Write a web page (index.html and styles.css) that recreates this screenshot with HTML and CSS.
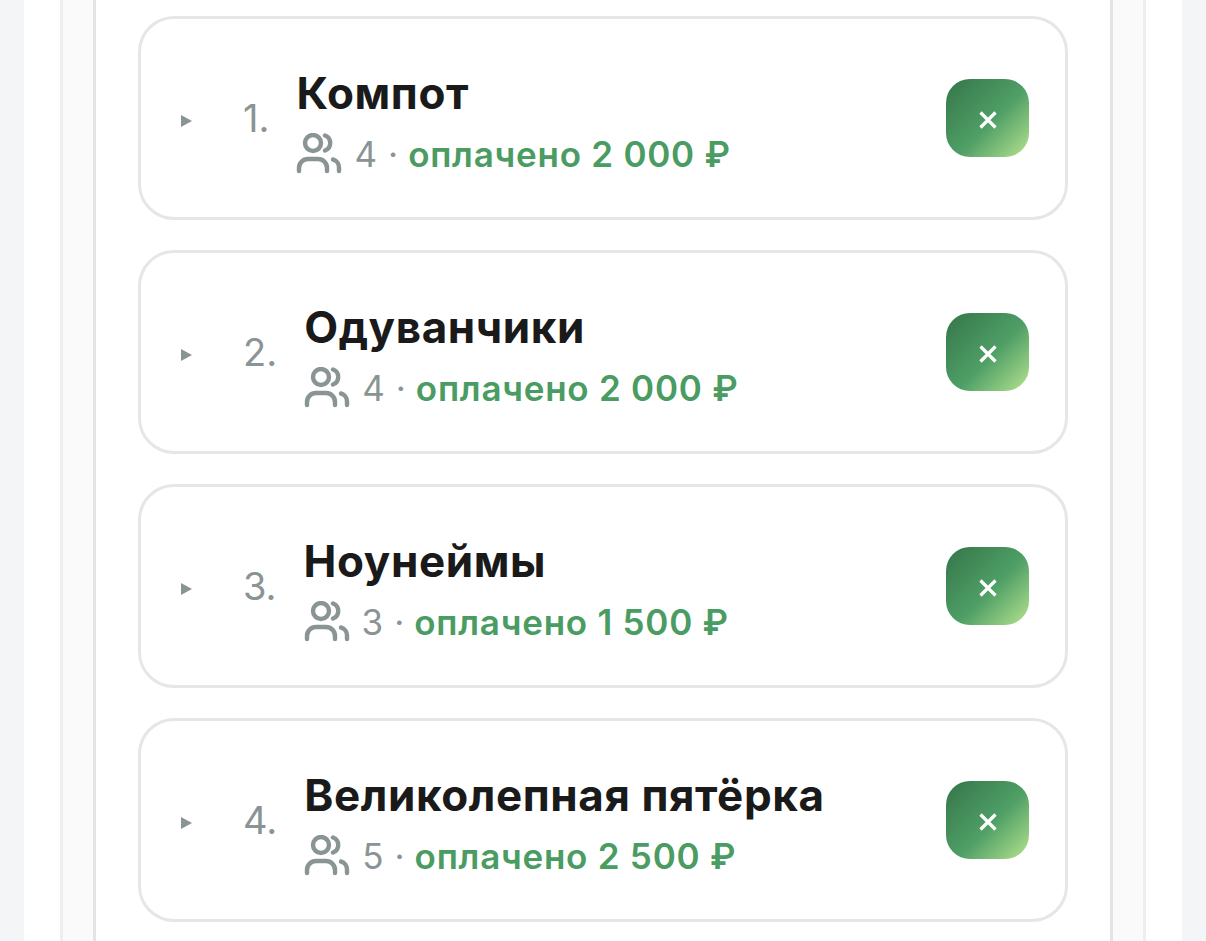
FILE: index.html
```html
<!DOCTYPE html>
<html lang="en">
<head>
    <meta charset="UTF-8">
    <meta name="viewport" content="width=device-width, initial-scale=1.0">
    <title>Команды</title>
    <link rel="stylesheet" href="styles.css">
</head>
<body>
    <svg class="icon-defs" width="0" height="0">
        <symbol id="users" viewBox="0 0 46 42">
            <circle cx="17" cy="10" r="8"/>
            <path d="M29 2.500a8 8 0 0 1 0 15"/>
            <path d="M3 38v-3a9 9 0 0 1 9-9h10a9 9 0 0 1 9 9v3"/>
            <path d="M37 26.500a8 8 0 0 1 6 8v3.500"/>
        </symbol>
        <symbol id="cross" viewBox="0 0 20 20">
            <path d="M2.500 2.500l15 15M17.500 2.500l-15 15"/>
        </symbol>
    </svg>
    <div class="page">
        <div class="frame">
            <div class="panel">
                <div class="team-list">
                    <div class="team-card">
                        <span class="arrow"></span>
                        <span class="team-num">1.</span>
                        <div class="team-info">
                            <div class="team-name">Компот</div>
                            <div class="team-meta">
                                <svg class="users-icon"><use href="#users"/></svg>
                                <span>4</span><span class="dot">·</span><span class="paid">оплачено 2 000 ₽</span>
                            </div>
                        </div>
                        <button class="remove-btn"><svg class="cross-icon"><use href="#cross"/></svg></button>
                    </div>
                    <div class="team-card">
                        <span class="arrow"></span>
                        <span class="team-num">2.</span>
                        <div class="team-info">
                            <div class="team-name">Одуванчики</div>
                            <div class="team-meta">
                                <svg class="users-icon"><use href="#users"/></svg>
                                <span>4</span><span class="dot">·</span><span class="paid">оплачено 2 000 ₽</span>
                            </div>
                        </div>
                        <button class="remove-btn"><svg class="cross-icon"><use href="#cross"/></svg></button>
                    </div>
                    <div class="team-card">
                        <span class="arrow"></span>
                        <span class="team-num">3.</span>
                        <div class="team-info">
                            <div class="team-name">Ноунеймы</div>
                            <div class="team-meta">
                                <svg class="users-icon"><use href="#users"/></svg>
                                <span>3</span><span class="dot">·</span><span class="paid">оплачено 1 500 ₽</span>
                            </div>
                        </div>
                        <button class="remove-btn"><svg class="cross-icon"><use href="#cross"/></svg></button>
                    </div>
                    <div class="team-card">
                        <span class="arrow"></span>
                        <span class="team-num">4.</span>
                        <div class="team-info">
                            <div class="team-name">Великолепная пятёрка</div>
                            <div class="team-meta">
                                <svg class="users-icon"><use href="#users"/></svg>
                                <span>5</span><span class="dot">·</span><span class="paid">оплачено 2 500 ₽</span>
                            </div>
                        </div>
                        <button class="remove-btn"><svg class="cross-icon"><use href="#cross"/></svg></button>
                    </div>
                </div>
            </div>
        </div>
    </div>
</body>
</html>
```

FILE: styles.css
```css
html, body {
    height: 100%;
}

body {
    font-family: "Inter", sans-serif;
    margin: 0;
    padding: 0 24px;
    background-color: #f4f5f7;
    color: #1a1a1a;
    overflow: hidden;
}

.icon-defs {
    position: absolute;
}

.page {
    height: 100%;
    padding: 0 36px;
    background-color: #ffffff;
}

.frame {
    height: 100%;
    padding: 0 30px;
    background-color: #fafafb;
    border-left: 3px solid #eeeef1;
    border-right: 3px solid #eeeef1;
}

.panel {
    height: 100%;
    padding: 16px 42px 0;
    background-color: #ffffff;
    border-left: 3px solid #e4e4e7;
    border-right: 3px solid #e4e4e7;
}

.team-list {
    display: flex;
    flex-direction: column;
    gap: 30px;
}

.team-card {
    display: flex;
    flex-shrink: 0;
    align-items: center;
    box-sizing: border-box;
    height: 204px;
    padding: 0 36px 0 40px;
    background-color: #ffffff;
    border: 3px solid #e6e6e6;
    border-radius: 36px;
}

.arrow {
    width: 0;
    height: 0;
    margin: 6px 51px 0 0;
    border-top: 6px solid transparent;
    border-bottom: 6px solid transparent;
    border-left: 11px solid #8a9494;
}

.team-num {
    margin: 0 27px 0 0;
    font-size: 38px;
    color: #8a9494;
}

.team-info {
    flex: 1;
    padding-top: 7px;
}

.team-name {
    font-size: 44px;
    font-weight: 700;
    line-height: 50px;
    letter-spacing: 0.6px;
}

.team-meta {
    display: flex;
    align-items: center;
    margin-top: 15px;
    font-size: 35px;
    line-height: 40px;
    color: #8a9494;
}

.users-icon {
    flex-shrink: 0;
    width: 46px;
    height: 42px;
    margin-right: 12px;
    fill: none;
    stroke: #8a9494;
    stroke-width: 4.400;
    stroke-linecap: round;
}

.dot {
    margin: 0 10px 0 11px;
}

.paid {
    font-weight: 600;
    letter-spacing: 0.75px;
    color: #4a9c62;
}

.remove-btn {
    display: flex;
    align-items: center;
    justify-content: center;
    width: 83px;
    height: 78px;
    margin-top: -1px;
    padding: 4px 0 0;
    border: none;
    border-radius: 24px;
    background: linear-gradient(135deg, #35754a 0%, #4f9f66 55%, #b5e38f 100%);
    cursor: pointer;
}

.cross-icon {
    width: 20px;
    height: 20px;
    fill: none;
    stroke: #ffffff;
    stroke-width: 3.200;
}
```
